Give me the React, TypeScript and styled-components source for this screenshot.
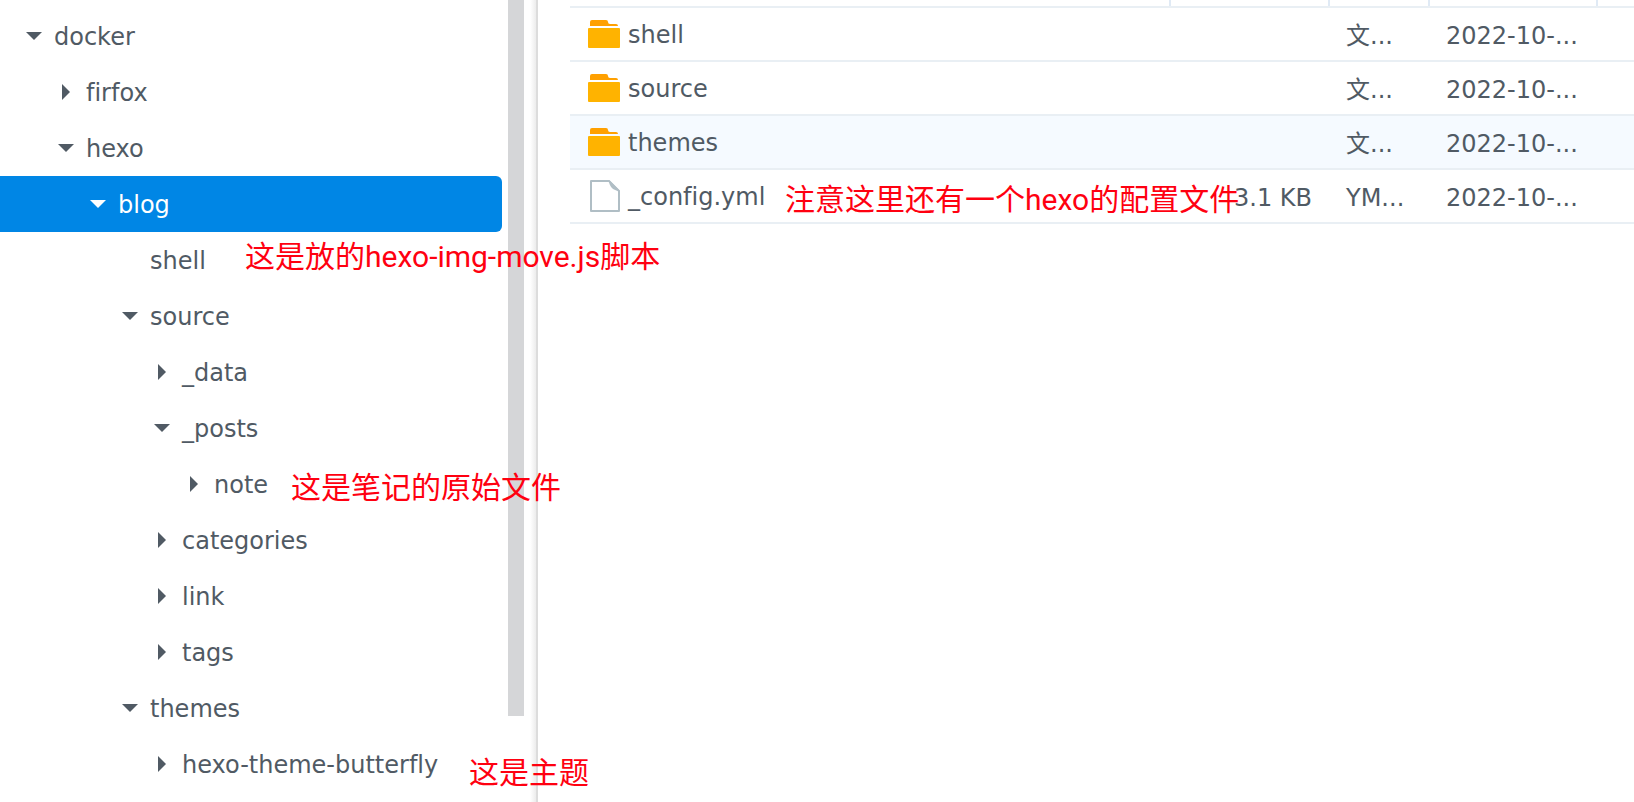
import React, { useState } from "react";
import styled, { createGlobalStyle } from "styled-components";

const GlobalStyle = createGlobalStyle`
  * { box-sizing: border-box; }
  body {
    margin: 0;
    background: #fff;
    color: #505a64;
    font-family: "DejaVu Sans", "Noto Sans CJK SC", sans-serif;
    font-size: 24px;
    line-height: 32px;
    font-variant-ligatures: none;
  }
`;

const Page = styled.div`
  position: relative;
  display: flex;
  height: 100vh;
  overflow: hidden;
`;

const Sidebar = styled.aside`
  display: flex;
  flex: none;
  width: 538px;
  border-right: 2px solid #dcdcdc;
`;

const Tree = styled.nav`
  flex: none;
  width: 502px;
  padding-top: 8px;
`;

const TreeRow = styled.button<{ $depth: number; $selected: boolean }>`
  display: flex;
  align-items: center;
  gap: 12px;
  width: 100%;
  height: 56px;
  padding: 0 0 0 ${(p) => 26 + p.$depth * 32}px;
  border: 0;
  border-radius: 0 6px 6px 0;
  background: ${(p) => (p.$selected ? "#0086e5" : "transparent")};
  color: ${(p) => (p.$selected ? "#fff" : "inherit")};
  font: inherit;
  font-variant-ligatures: none;
  text-align: left;
  cursor: pointer;
`;

const TreeLabel = styled.span`
  padding-top: 2px;
`;

const CaretBox = styled.svg`
  flex: none;
  width: 16px;
  height: 16px;
  fill: currentColor;
`;

const ScrollThumb = styled.div`
  width: 16px;
  margin: 0 6px 86px;
  background: #d5d6d8;
`;

const EdgeShade = styled.div`
  flex: 1;
  background: linear-gradient(to right, #fff, #ececec);
`;

const Files = styled.main`
  flex: 1;
  min-width: 0;
  padding-left: 32px;
`;

const Table = styled.table`
  width: 100%;
  table-layout: fixed;
  border-collapse: separate;
  border-spacing: 0;
`;

const Col = styled.col<{ $width?: number }>`
  width: ${(p) => (p.$width ? `${p.$width}px` : "auto")};
`;

const HeadCell = styled.td`
  height: 8px;
  padding: 0;
  border-bottom: 2px solid #e9eff4;
  line-height: 0;
`;

const HeadRule = styled.div<{ $last?: boolean }>`
  height: 6px;
  border-right: ${(p) => (p.$last ? "0" : "2px solid #e0eaf5")};
`;

const FileRow = styled.tr<{ $hover: boolean }>`
  background: ${(p) => (p.$hover ? "#f5faff" : "transparent")};
`;

const Cell = styled.td<{ $align?: "right" }>`
  height: 54px;
  padding: 4px 18px 0 16px;
  border-bottom: 2px solid #e9eff4;
  text-align: ${(p) => p.$align ?? "left"};
  white-space: nowrap;
`;

const NameCell = styled(Cell)`
  padding-top: 0;
`;

const FileName = styled.div`
  display: flex;
  align-items: center;
  gap: 8px;
  padding-left: 2px;
`;

const Label = styled.span`
  padding-top: 2px;
`;

const Icon = styled.svg`
  flex: none;
  width: 32px;
  height: 32px;
`;

const Note = styled.div<{ $x: number; $y: number }>`
  position: absolute;
  left: ${(p) => p.$x}px;
  top: ${(p) => p.$y}px;
  color: #ff0010;
  font-family: Roboto, "Noto Sans CJK SC", sans-serif;
  font-size: 30px;
  line-height: 40px;
  white-space: nowrap;
  pointer-events: none;
`;

type Node = { name: string; depth: number; state?: "open" | "closed" };

const nodes: Node[] = [
  { name: "docker", depth: 0, state: "open" },
  { name: "firfox", depth: 1, state: "closed" },
  { name: "hexo", depth: 1, state: "open" },
  { name: "blog", depth: 2, state: "open" },
  { name: "shell", depth: 3 },
  { name: "source", depth: 3, state: "open" },
  { name: "_data", depth: 4, state: "closed" },
  { name: "_posts", depth: 4, state: "open" },
  { name: "note", depth: 5, state: "closed" },
  { name: "categories", depth: 4, state: "closed" },
  { name: "link", depth: 4, state: "closed" },
  { name: "tags", depth: 4, state: "closed" },
  { name: "themes", depth: 3, state: "open" },
  { name: "hexo-theme-butterfly", depth: 4, state: "closed" },
];

const files = [
  { name: "shell", folder: true, size: "", type: "文...", date: "2022-10-..." },
  { name: "source", folder: true, size: "", type: "文...", date: "2022-10-..." },
  { name: "themes", folder: true, size: "", type: "文...", date: "2022-10-..." },
  { name: "_config.yml", folder: false, size: "3.1 KB", type: "YM...", date: "2022-10-..." },
];

const notes = [
  { text: "注意这里还有一个hexo的配置文件", x: 785, y: 180 },
  { text: "这是放的hexo-img-move.js脚本", x: 245, y: 237 },
  { text: "这是笔记的原始文件", x: 291, y: 468 },
  { text: "这是主题", x: 469, y: 753 },
];

function Caret({ state }: { state?: "open" | "closed" }) {
  return (
    <CaretBox viewBox="0 0 16 16" aria-hidden="true">
      {state === "open" && <path d="M0 4h16L8 12z" />}
      {state === "closed" && <path d="M4 0v16l8-8z" />}
    </CaretBox>
  );
}

function FolderIcon() {
  return (
    <Icon viewBox="0 0 32 32" aria-hidden="true">
      <path d="M2 8V4q0-2 2-2h14q2 0 2 2t2 2h6q2 0 2 2z" fill="#ffa000" />
      <rect y="10" width="32" height="20" rx="1" fill="#ffb300" />
    </Icon>
  );
}

function FileIcon() {
  return (
    <Icon viewBox="0 0 32 32" aria-hidden="true">
      <path d="M3 1h18l10 10v20H3z" fill="#fff" stroke="#b0bec5" strokeWidth="2" strokeLinejoin="round" />
      <path d="M21 0l11 11q-4 0-7-2-4-3-4-9z" fill="#b0bec5" />
    </Icon>
  );
}

export default function App() {
  const [selected, setSelected] = useState("blog");
  return (
    <Page>
      <GlobalStyle />
      <Sidebar>
        <Tree aria-label="Folders">
          {nodes.map((n) => (
            <TreeRow
              key={n.name}
              type="button"
              $depth={n.depth}
              $selected={n.name === selected}
              onClick={() => setSelected(n.name)}
            >
              <Caret state={n.state} />
              <TreeLabel>{n.name}</TreeLabel>
            </TreeRow>
          ))}
        </Tree>
        <ScrollThumb />
        <EdgeShade />
      </Sidebar>
      <Files>
        <Table>
          <colgroup>
            <Col />
            <Col $width={159} />
            <Col $width={100} />
            <Col $width={168} />
            <Col $width={36} />
          </colgroup>
          <thead>
            <tr>
              {[0, 1, 2, 3, 4].map((i) => (
                <HeadCell key={i}>
                  <HeadRule $last={i === 4} />
                </HeadCell>
              ))}
            </tr>
          </thead>
          <tbody>
            {files.map((f) => (
              <FileRow key={f.name} $hover={f.name === "themes"}>
                <NameCell>
                  <FileName>
                    {f.folder ? <FolderIcon /> : <FileIcon />}
                    <Label>{f.name}</Label>
                  </FileName>
                </NameCell>
                <Cell $align="right">{f.size}</Cell>
                <Cell>{f.type}</Cell>
                <Cell>{f.date}</Cell>
                <Cell />
              </FileRow>
            ))}
          </tbody>
        </Table>
      </Files>
      {notes.map((n) => (
        <Note key={n.text} $x={n.x} $y={n.y}>
          {n.text}
        </Note>
      ))}
    </Page>
  );
}
